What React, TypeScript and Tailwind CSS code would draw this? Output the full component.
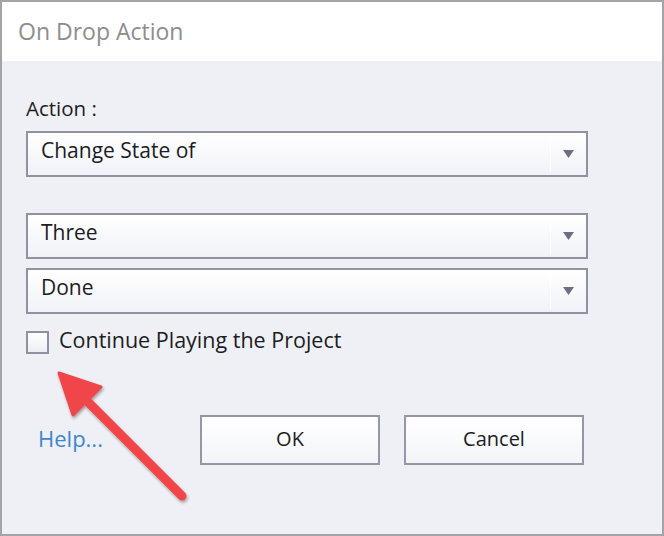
function Caret() {
  return (
    <svg width="11" height="8" viewBox="0 0 11 8" className="block">
      <path d="M0 0h11L5.5 8z" fill="#6c6f82" />
    </svg>
  )
}

function Dropdown({ label }: { label: string }) {
  return (
    <div className="flex h-[46px] w-[562px] items-center border-2 border-[#9092a4] bg-gradient-to-b from-white to-[#f1f2f8]">
      <span className="flex-1 pb-[6px] pl-[13px] text-[21px] text-[#1c1c24]">{label}</span>
      <div className="h-[36px] w-px bg-white" />
      <div className="flex w-[35px] justify-center">
        <Caret />
      </div>
    </div>
  )
}

function Button({ children }: { children: React.ReactNode }) {
  return (
    <button
      type="button"
      className="flex h-[50px] w-[180px] items-center justify-center border-2 border-[#9597a8] bg-gradient-to-b from-white to-[#f3f4f9] pb-[3px] text-[20px] text-[#1c1c24]"
    >
      {children}
    </button>
  )
}

export default function App() {
  return (
    <div
      className="relative h-[536px] w-[664px] overflow-hidden border-2 border-[#a3a3a8] bg-[#eff0f5]"
      style={{ fontFamily: '"Open Sans", "Noto Sans", sans-serif' }}
    >
      <div className="flex h-[59px] items-center bg-white pl-[16px] text-[23px] text-[#8d8d8d]">
        On Drop Action
      </div>

      <div className="flex flex-col pl-[24px]">
        <div className="mt-[35px] h-[24px] text-[20.5px] leading-[24px] text-[#1c1c24]">Action :</div>
        <div className="mt-[11px]">
          <Dropdown label="Change State of" />
        </div>
        <div className="mt-[36px]">
          <Dropdown label="Three" />
        </div>
        <div className="mt-[9px]">
          <Dropdown label="Done" />
        </div>

        <label className="mt-[17px] flex h-[23px] items-center gap-[10px]">
          <span className="h-[23px] w-[23px] border-2 border-[#8f91a3] bg-gradient-to-b from-white to-[#eceef4]" />
          <span className="pb-[4px] text-[21.5px] text-[#1c1c24]">Continue Playing the Project</span>
        </label>

        <div className="mt-[61px] flex items-center">
          <a className="w-[174px] pb-[3px] pl-[12px] text-[22px] text-[#3d86cf]">Help...</a>
          <div className="flex gap-[24px]">
            <Button>OK</Button>
            <Button>Cancel</Button>
          </div>
        </div>
      </div>

      <svg
        className="pointer-events-none absolute left-0 top-0"
        width="664"
        height="536"
        viewBox="0 0 664 536"
      >
        <defs>
          <filter id="sh" x="-20%" y="-20%" width="140%" height="140%">
            <feDropShadow dx="1" dy="2" stdDeviation="1.5" floodColor="#000" floodOpacity="0.35" />
          </filter>
        </defs>
        <g filter="url(#sh)">
          <line x1="180" y1="494" x2="82" y2="396" stroke="#f0454a" strokeWidth="9" strokeLinecap="round" />
          <path d="M57 371 L99 385 L71 413 Z" fill="#f0454a" stroke="#f0454a" strokeWidth="3" strokeLinejoin="round" />
        </g>
      </svg>
    </div>
  )
}
